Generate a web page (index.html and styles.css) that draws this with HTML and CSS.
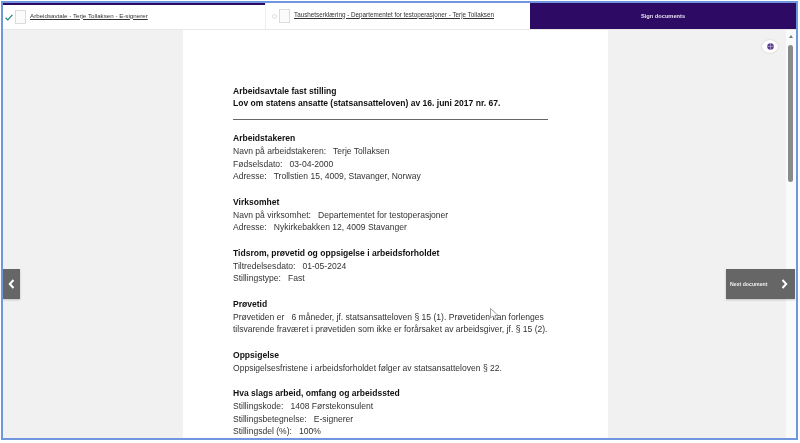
FILE: index.html
```html
<!DOCTYPE html>
<html lang="no">
<head>
  <meta charset="UTF-8">
  <meta name="viewport" content="width=device-width, initial-scale=1.0">
  <title>Sign documents</title>
  <link rel="stylesheet" href="styles.css">
</head>
<body>
  <div class="frame">
    <div class="tabs">
      <div class="tab tab-active">
        <svg class="status" width="8" height="7" viewBox="0 0 8 7"><path d="M0.6 3.8 L2.8 5.9 L7.4 0.9" fill="none" stroke="#1f7f78" stroke-width="1.2"/></svg>
        <svg class="doc" width="11" height="14" viewBox="0 0 11 14"><rect x="0.5" y="0.5" width="10" height="13" fill="#fbfbfb" stroke="#dcdcdc"/></svg>
        <a class="tab-link">Arbeidsavtale - Terje Tollaksen - E-signerer</a>
      </div>
      <div class="tab tab-second">
        <span class="radio"></span>
        <svg class="doc" width="11" height="14" viewBox="0 0 11 14"><rect x="0.5" y="0.5" width="10" height="13" fill="#fbfbfb" stroke="#dcdcdc"/></svg>
        <a class="tab-link">Taushetserklæring - Departementet for testoperasjoner - Terje Tollaksen</a>
      </div>
      <div class="sign">Sign documents</div>
    </div>

    <div class="viewer">
      <div class="paper">
        <p class="line bold">Arbeidsavtale fast stilling</p>
        <p class="line bold">Lov om statens ansatte (statsansatteloven) av 16. juni 2017 nr. 67.</p>
        <div class="rule"></div>

        <section class="block">
          <p class="line bold">Arbeidstakeren</p>
          <p class="line">Navn på arbeidstakeren: &nbsp; Terje Tollaksen</p>
          <p class="line">Fødselsdato: &nbsp; 03-04-2000</p>
          <p class="line">Adresse: &nbsp; Trollstien 15, 4009, Stavanger, Norway</p>
        </section>

        <section class="block">
          <p class="line bold">Virksomhet</p>
          <p class="line">Navn på virksomhet: &nbsp; Departementet for testoperasjoner</p>
          <p class="line">Adresse: &nbsp; Nykirkebakken 12, 4009 Stavanger</p>
        </section>

        <section class="block">
          <p class="line bold">Tidsrom, prøvetid og oppsigelse i arbeidsforholdet</p>
          <p class="line">Tiltredelsesdato: &nbsp; 01-05-2024</p>
          <p class="line">Stillingstype: &nbsp; Fast</p>
        </section>

        <section class="block">
          <p class="line bold">Prøvetid</p>
          <p class="line">Prøvetiden er &nbsp; 6 måneder, jf. statsansatteloven § 15 (1). Prøvetiden kan forlenges</p>
          <p class="line">tilsvarende fraværet i prøvetiden som ikke er forårsaket av arbeidsgiver, jf. § 15 (2).</p>
        </section>

        <section class="block">
          <p class="line bold">Oppsigelse</p>
          <p class="line">Oppsigelsesfristene i arbeidsforholdet følger av statsansatteloven § 22.</p>
        </section>

        <section class="block">
          <p class="line bold">Hva slags arbeid, omfang og arbeidssted</p>
          <p class="line">Stillingskode: &nbsp; 1408 Førstekonsulent</p>
          <p class="line">Stillingsbetegnelse: &nbsp; E-signerer</p>
          <p class="line">Stillingsdel (%): &nbsp; 100%</p>
        </section>
      </div>

      <div class="scrollbar">
        <span class="arrow"></span>
        <span class="thumb"></span>
      </div>

      <div class="nav nav-prev">
        <svg width="7" height="10" viewBox="0 0 7 10"><path d="M5.5 1 L1.8 5 L5.5 9" fill="none" stroke="#fff" stroke-width="2"/></svg>
      </div>
      <div class="nav nav-next">
        <span>Next document</span>
        <svg width="7" height="10" viewBox="0 0 7 10"><path d="M1.5 1 L5.2 5 L1.5 9" fill="none" stroke="#fff" stroke-width="2"/></svg>
      </div>

      <div class="lang">
        <svg width="7" height="7" viewBox="0 0 9 9"><circle cx="4.5" cy="4.5" r="4.2" fill="#5a3d8f"/><path d="M0.5 4.5 H8.5 M4.5 0.5 V8.5" stroke="#cfc6e0" stroke-width="0.7"/></svg>
      </div>

      <svg class="cursor" width="9" height="13" viewBox="0 0 9 13"><path d="M0.5 0.5 V10 L3 8 L5 12 L6.5 11.2 L4.8 7.6 L8 7.4 Z" fill="#fff" stroke="#777" stroke-width="0.7"/></svg>
    </div>
  </div>
</body>
</html>
```

FILE: styles.css
```css
html, body {
  margin: 0;
  padding: 0;
  background: #fff;
}
body {
  font-family: "Liberation Sans", Arial, sans-serif;
  color: #333;
}
/* the whole shot is a bit soft, like a scaled down capture */
.frame {
  width: 797px;
  height: 439px;
  margin: 1px 0 0 1px;
  box-sizing: border-box;
  border: 2px solid #6f97e0;
  display: flex;
  flex-direction: column;
  overflow: hidden;
  filter: blur(0.3px);
}
.tabs {
  display: flex;
  height: 27px;
  flex: none;
  background: #fff;
  border-bottom: 1px solid #e8e8e8;
  box-sizing: border-box;
}
.tab {
  display: flex;
  align-items: center;
  box-sizing: border-box;
  gap: 2px;
  font-size: 6.2px;
  color: #333;
}
.tab-active {
  width: 262px;
  padding-left: 2px;
  border-top: 2px solid #2d0a63;
}
.tab-second {
  width: 265px;
  padding-left: 6px;
  border-left: 1px solid #eee;
  font-size: 6.3px;
}
.doc {
  margin-right: 2px;
}
.tab-link {
  margin-bottom: 4px;
  text-decoration: underline;
}
.radio {
  width: 3px;
  height: 3px;
  border: 1px solid #ddd;
  border-radius: 50%;
}
.sign {
  flex: 1;
  background: #2d0a63;
  color: #e6e0f0;
  font-size: 5.7px;
  font-weight: bold;
  display: flex;
  align-items: center;
  justify-content: center;
}
.viewer {
  position: relative;
  flex: 1;
  background: #f1f1f1;
  overflow: hidden;
  display: flex;
  justify-content: center;
}
.paper {
  width: 425px;
  margin-right: 8px;
  box-sizing: border-box;
  padding: 54.6px 50px 0;
  background: #fff;
  font-size: 8.56px;
  line-height: 12.75px;
}
.line {
  margin: 0;
  white-space: nowrap;
}
.bold {
  font-weight: bold;
  color: #111;
}
.rule {
  width: 315px;
  height: 1px;
  background: #666;
  margin: 9px 0 12px;
}
.block {
  margin-bottom: 12.75px;
}
.nav {
  position: absolute;
  top: 239px;
  height: 30px;
  background: #666;
  display: flex;
  align-items: center;
  box-shadow: 0 1px 2px rgba(0, 0, 0, 0.2);
}
.nav-prev {
  left: 0;
  width: 17px;
  justify-content: center;
}
.nav-next {
  left: 723px;
  width: 69px;
  box-sizing: border-box;
  padding: 0 7px 0 4px;
  justify-content: space-between;
  color: #eee;
  font-size: 5.2px;
  font-weight: bold;
}
.lang {
  position: absolute;
  left: 759px;
  top: 10px;
  width: 16px;
  height: 13px;
  border-radius: 50%;
  background: #fff;
  box-shadow: 0 0 2px rgba(0, 0, 0, 0.2);
  display: flex;
  align-items: center;
  justify-content: center;
}
.cursor {
  position: absolute;
  left: 487px;
  top: 278px;
}
.scrollbar {
  position: absolute;
  right: 0;
  top: 0;
  bottom: 0;
  width: 10px;
  background: #fafafa;
}
.arrow {
  position: absolute;
  left: 2.5px;
  top: 5px;
  width: 0;
  height: 0;
  border-left: 2.5px solid transparent;
  border-right: 2.5px solid transparent;
  border-bottom: 3px solid #777;
}
.thumb {
  position: absolute;
  left: 2px;
  top: 15px;
  width: 5px;
  height: 137px;
  border-radius: 2.5px;
  background: #8a8a8a;
}
```
